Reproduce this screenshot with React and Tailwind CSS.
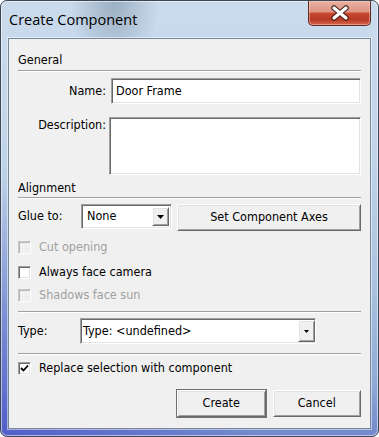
import React from "react";

const sunken =
  "border border-t-[#a0a0a0] border-l-[#a0a0a0] border-b-white border-r-white shadow-[inset_1px_1px_0_#696969,inset_-1px_-1px_0_#e3e3e3]";
const raised =
  "border border-t-white border-l-white border-b-[#696969] border-r-[#696969] shadow-[inset_1px_1px_0_#e3e3e3,inset_-1px_-1px_0_#a0a0a0] bg-[#f0f0f0]";

const CheckBox = ({ checked, disabled, label }) => (
  <div className="flex items-center h-[15px]">
    <span
      className={
        disabled
          ? "w-[13px] h-[13px] border border-t-[#c8c8c8] border-l-[#c8c8c8] border-b-white border-r-white shadow-[inset_1px_1px_0_#b4b4b4,inset_-1px_-1px_0_#ececec] bg-[#f0f0f0]"
          : `w-[13px] h-[13px] bg-white flex items-center justify-center ${sunken}`
      }
    >
      {checked && (
        <svg width="9" height="9" viewBox="0 0 9 9">
          <path d="M1 4 L3.5 6.5 L8 1.5" fill="none" stroke="#000" strokeWidth="1.8" />
        </svg>
      )}
    </span>
    <span className={`ml-[8px] ${disabled ? "text-[#a0a0a0]" : "text-black"}`}>{label}</span>
  </div>
);

const Separator = ({ className }) => (
  <div className={`h-[2px] border-t border-t-[#a0a0a0] border-b border-b-white ${className}`} />
);

const DropButton = ({ small }) => (
  <span className={`w-[17px] h-full flex items-center justify-center ${raised}`}>
    {small ? (
      <svg width="5" height="3" viewBox="0 0 5 3">
        <path d="M0 0 H5 L2.5 3 Z" fill="#000" />
      </svg>
    ) : (
      <svg width="7" height="4" viewBox="0 0 7 4">
        <path d="M0 0 H7 L3.5 4 Z" fill="#000" />
      </svg>
    )}
  </span>
);

export default function App() {
  return (
    <div className="w-[379px] h-[437px] bg-white">
      <div className="relative w-[379px] h-[437px] rounded-[7px] border border-[#3b4756] overflow-hidden bg-[radial-gradient(circle_at_0%_100%,rgba(70,80,200,0.75),transparent_45%),radial-gradient(ellipse_at_30%_0%,rgba(70,95,120,0.35),transparent_12%),linear-gradient(180deg,#cadbec_0%,#c0d4e9_35%,#aac3df_65%,#8ea9d6_88%,#7388cc_100%)] shadow-[inset_0_0_0_1px_rgba(255,255,255,0.55)] font-['DejaVu_Sans_Condensed','Liberation_Sans',sans-serif] text-[12.5px]">
        {/* title bar */}
        <div className="flex items-start justify-between h-[37px]">
          <div className="ml-[8px] mt-[9px] h-[20px] leading-[20px] text-[14.5px] text-black font-['Open_Sans',sans-serif]">
            Create Component
          </div>
          <div className="mr-[7px] w-[63px] h-[25px] rounded-b-[5px] border border-t-0 border-[#5e2c26] bg-[linear-gradient(180deg,#eab2a3_0%,#dc9383_45%,#c7472f_52%,#b93a25_78%,#d7694c_100%)] shadow-[inset_0_0_0_1px_rgba(255,210,200,0.45)] flex items-center justify-center">
            <svg width="22" height="16" viewBox="0 0 22 16">
              <path d="M5 3 L17 13 M17 3 L5 13" stroke="#4d1f18" strokeWidth="5.5" strokeLinecap="round" />
              <path d="M5 3 L17 13 M17 3 L5 13" stroke="#ffffff" strokeWidth="3.2" strokeLinecap="round" />
            </svg>
          </div>
        </div>

        {/* client area */}
        <div className="ml-[7px] w-[363px] h-[391px] border border-[#78879a] shadow-[0_0_0_1px_rgba(255,255,255,0.5)] bg-[#f0f0f0] px-[9px] flex flex-col text-black">
          <div className="mt-[14px] h-[14px] leading-[14px]">General</div>
          <Separator className="mt-[3px]" />

          <div className="mt-[6px] flex items-center h-[26px]">
            <div className="w-[88px] text-right">Name:</div>
            <div className={`ml-[5px] w-[250px] h-[26px] bg-white flex items-center pl-[4px] ${sunken}`}>
              Door Frame
            </div>
          </div>

          <div className="mt-[13px] flex items-start h-[58px]">
            <div className="w-[88px] text-right pt-[1px] leading-[14px]">Description:</div>
            <div className={`ml-[3px] w-[252px] h-[58px] bg-white ${sunken}`} />
          </div>

          <div className="mt-[6px] h-[14px] leading-[14px]">Alignment</div>
          <Separator className="mt-[2px]" />

          <div className="mt-[5px] flex items-start h-[27px]">
            <div className="w-[63px] h-[25px] flex items-center">Glue to:</div>
            <div className={`w-[91px] h-[25px] bg-white flex items-center justify-between p-[2px] ${sunken}`}>
              <span className="pl-[3px]">None</span>
              <DropButton />
            </div>
            <div className={`ml-[5px] w-[184px] h-[27px] flex items-center justify-center ${raised}`}>
              Set Component Axes
            </div>
          </div>

          <div className="mt-[9px]">
            <CheckBox disabled label="Cut opening" />
          </div>
          <div className="mt-[10px]">
            <CheckBox label="Always face camera" />
          </div>
          <div className="mt-[8px]">
            <CheckBox disabled label="Shadows face sun" />
          </div>

          <Separator className="mt-[8px]" />

          <div className="mt-[5px] flex items-center h-[26px]">
            <div className="w-[62px]">Type:</div>
            <div className={`w-[236px] h-[26px] bg-white flex items-center justify-between pl-[2px] pr-0 py-[1px] ${sunken}`}>
              <span>Type: &lt;undefined&gt;</span>
              <DropButton small />
            </div>
          </div>

          <Separator className="mt-[9px]" />

          <div className="mt-[6px]">
            <CheckBox checked label="Replace selection with component" />
          </div>

          <div className="mt-[14px] flex pl-[159px] gap-[7px]">
            <div className={`w-[89px] h-[27px] flex items-center justify-center ring-1 ring-[#707070] ${raised}`}>
              Create
            </div>
            <div className={`w-[89px] h-[27px] flex items-center justify-center ${raised}`}>Cancel</div>
          </div>
        </div>
      </div>
    </div>
  );
}
